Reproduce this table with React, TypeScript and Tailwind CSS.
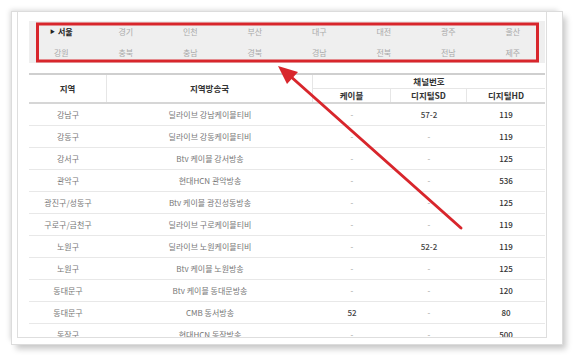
import React from 'react';

type Row = {
  area: string;
  station: string;
  cable: string;
  sd: string;
  hd: string;
};

const regions = [
  ['서울', '경기', '인천', '부산', '대구', '대전', '광주', '울산'],
  ['강원', '충북', '충남', '경북', '경남', '전북', '전남', '제주'],
];

const rows: Row[] = [
  { area: '강남구', station: '딜라이브 강남케이블티비', cable: '-', sd: '57-2', hd: '119' },
  { area: '강동구', station: '딜라이브 강동케이블티비', cable: '-', sd: '-', hd: '119' },
  { area: '강서구', station: 'Btv 케이블 강서방송', cable: '-', sd: '-', hd: '125' },
  { area: '관악구', station: '현대HCN 관악방송', cable: '-', sd: '-', hd: '536' },
  { area: '광진구/성동구', station: 'Btv 케이블 광진성동방송', cable: '-', sd: '-', hd: '125' },
  { area: '구로구/금천구', station: '딜라이브 구로케이블티비', cable: '-', sd: '-', hd: '119' },
  { area: '노원구', station: '딜라이브 노원케이블티비', cable: '-', sd: '52-2', hd: '119' },
  { area: '노원구', station: 'Btv 케이블 노원방송', cable: '-', sd: '-', hd: '125' },
  { area: '동대문구', station: 'Btv 케이블 동대문방송', cable: '-', sd: '-', hd: '120' },
  { area: '동대문구', station: 'CMB 동서방송', cable: '52', sd: '-', hd: '80' },
  { area: '동작구', station: '현대HCN 동작방송', cable: '-', sd: '-', hd: '500' },
];

function numClass(v: string) {
  return v === '-' ? 'text-[#999]' : 'text-[#444] font-medium';
}

export default function App() {
  return (
    <div className="relative w-[574px] h-[355px] bg-white overflow-hidden pt-[11px] pl-[11px] font-['Noto_Sans_CJK_KR',sans-serif]">
      {/* card */}
      <div className="w-[552px] h-[334px] border border-[#dcdcdc] bg-white shadow-[-3px_-3px_5px_-2px_rgba(0,0,0,0.15),4px_5px_6px_-1px_rgba(0,0,0,0.22)]">
        <div className="ml-[5px] w-[530px] h-[326px] border-x border-b border-[#dedede] overflow-hidden pl-[11px] pt-[9px]">
          {/* region tabs */}
          <div className="w-[516px] h-[42px] bg-[#efefef] grid grid-cols-8 grid-rows-2">
            {regions.flat().map((r, i) => (
              <div
                key={r}
                className={
                  i === 0
                    ? 'flex items-center justify-center text-[8px] font-bold text-[#222]'
                    : 'flex items-center justify-center text-[8px] text-[#aaa]'
                }
              >
                {i === 0 && <span className="text-[5px] mr-[3px] mt-[-1px]">▶</span>}
                {r}
              </div>
            ))}
          </div>

          {/* table */}
          <div className="mt-[10px] w-[516px]">
            <div className="flex h-[31px] border-t-2 border-b-2 border-t-[#cfcfcf] border-b-[#d6d6d6] text-[8.5px] font-bold text-[#333]">
              <div className="w-[78px] border-r border-[#e6e6e6] flex items-center justify-center">지역</div>
              <div className="w-[206px] border-r border-[#e6e6e6] flex items-center justify-center">지역방송국</div>
              <div className="w-[232px] flex flex-col">
                <div className="h-[14px] border-b border-[#e6e6e6] flex items-center justify-center">채널번호</div>
                <div className="flex-1 flex">
                  <div className="w-[78px] border-r border-[#e6e6e6] flex items-center justify-center">케이블</div>
                  <div className="w-[76px] border-r border-[#e6e6e6] flex items-center justify-center">디지털SD</div>
                  <div className="w-[78px] flex items-center justify-center">디지털HD</div>
                </div>
              </div>
            </div>

            {rows.map((row, i) => (
              <div key={i} className="flex h-[22px] border-b border-[#e8e8e8] text-[8px] text-[#777]">
                <div className="w-[78px] flex items-center justify-center">{row.area}</div>
                <div className="w-[206px] flex items-center justify-center">{row.station}</div>
                <div className={`w-[78px] flex items-center justify-center ${numClass(row.cable)}`}>{row.cable}</div>
                <div className={`w-[76px] flex items-center justify-center ${numClass(row.sd)}`}>{row.sd}</div>
                <div className="w-[78px] flex items-center justify-center text-[#333] font-medium">{row.hd}</div>
              </div>
            ))}
          </div>
        </div>
      </div>

      {/* annotation overlay */}
      <svg className="absolute left-0 top-0 pointer-events-none" width="574" height="355" viewBox="0 0 574 355">
        <rect x="37.5" y="24" width="500" height="37" fill="none" stroke="#d8262c" strokeWidth="3" />
        <line x1="461" y1="228" x2="289" y2="75" stroke="#d8262c" strokeWidth="3" strokeLinecap="round" />
        <polygon points="278,66 298,72 287,84" fill="#d8262c" />
      </svg>
    </div>
  );
}
